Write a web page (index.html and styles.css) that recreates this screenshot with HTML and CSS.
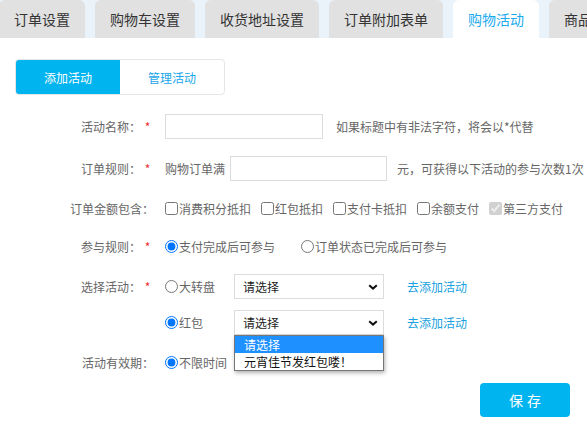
FILE: index.html
```html
<!DOCTYPE html>
<html lang="zh-CN">
<head>
<meta charset="utf-8">
<title>购物活动</title>
<link rel="stylesheet" href="styles.css">
</head>
<body>
<div class="tabs">
  <div class="tab">订单设置</div>
  <div class="tab">购物车设置</div>
  <div class="tab">收货地址设置</div>
  <div class="tab">订单附加表单</div>
  <div class="tab active">购物活动</div>
  <div class="tab">商品设置</div>
</div>

<div class="subtabs">
  <div class="subtab active">添加活动</div>
  <div class="subtab">管理活动</div>
</div>

<div class="form">
  <div class="row first">
    <div class="label">活动名称：<span class="req">*</span></div>
    <div class="field">
      <input class="text w-name" type="text">
      <span class="hint">如果标题中有非法字符，将会以*代替</span>
    </div>
  </div>

  <div class="row second">
    <div class="label">订单规则：<span class="req">*</span></div>
    <div class="field">
      <span>购物订单满</span>
      <input class="text w-amount" type="text">
      <span class="after">元，可获得以下活动的参与次数1次</span>
    </div>
  </div>

  <div class="row compact">
    <div class="label">订单金额包含：</div>
    <div class="field">
      <label class="check"><input type="checkbox">消费积分抵扣</label>
      <label class="check"><input type="checkbox">红包抵扣</label>
      <label class="check"><input type="checkbox">支付卡抵扣</label>
      <label class="check"><input type="checkbox">余额支付</label>
      <label class="check"><input type="checkbox" checked disabled>第三方支付</label>
    </div>
  </div>

  <div class="row">
    <div class="label">参与规则：<span class="req">*</span></div>
    <div class="field">
      <label class="check wide"><input type="radio" name="rule" checked>支付完成后可参与</label>
      <label class="check"><input type="radio" name="rule">订单状态已完成后可参与</label>
    </div>
  </div>

  <div class="group">
    <div class="row">
      <div class="label">选择活动：<span class="req">*</span></div>
      <div class="field">
        <label class="check fixed"><input type="radio" name="act">大转盘</label>
        <div class="select"><span>请选择</span><svg width="10" height="6" viewBox="0 0 10 6"><path d="M1.2 1.2L5 4.6L8.8 1.2" fill="none" stroke="#111" stroke-width="2"/></svg></div>
        <a class="link">去添加活动</a>
      </div>
    </div>
    <div class="row">
      <div class="label"></div>
      <div class="field">
        <label class="check fixed"><input type="radio" name="act" checked>红包</label>
        <div class="select"><span>请选择</span><svg width="10" height="6" viewBox="0 0 10 6"><path d="M1.2 1.2L5 4.6L8.8 1.2" fill="none" stroke="#111" stroke-width="2"/></svg>
          <div class="dropdown">
            <div class="option hl">请选择</div>
            <div class="option">元宵佳节发红包喽！</div>
          </div>
        </div>
        <a class="link">去添加活动</a>
      </div>
    </div>
  </div>

  <div class="row">
    <div class="label">活动有效期：</div>
    <div class="field">
      <label class="check"><input type="radio" name="valid" checked>不限时间</label>
    </div>
  </div>
</div>

<div class="actions">
  <div class="btn">保存</div>
</div>
</body>
</html>
```

FILE: styles.css
```css
html, body {
  margin: 0;
  padding: 0;
  background: #fff;
}
body {
  font-family: "Noto Sans CJK SC", "Microsoft YaHei", sans-serif;
  font-size: 12px;
  color: #666;
  overflow: hidden;
}

.tabs {
  display: flex;
  gap: 10px;
  height: 38px;
  margin-left: -1px;
  background: #eaf3fa;
  overflow: hidden;
  white-space: nowrap;
}
.tab {
  flex: none;
  padding: 0 15px;
  background: #e1e1e1;
  border-radius: 6px 6px 0 0;
  font-size: 14px;
  line-height: 38px;
  color: #333;
}
.tab.active {
  background: #fff;
  color: #1aaaf0;
}

.subtabs {
  display: flex;
  width: 210px;
  height: 36px;
  box-sizing: border-box;
  margin: 21px 0 0 15px;
  border: 1px solid #e6e6e6;
  border-radius: 4px;
  overflow: hidden;
}
.subtab {
  flex: 1;
  display: flex;
  align-items: center;
  justify-content: center;
  color: #1aa6ea;
}
.subtab.active {
  background: #00b4f0;
  color: #fff;
}

.form {
  display: flex;
  flex-direction: column;
  gap: 15px;
  margin-top: 19px;
}
.group {
  display: flex;
  flex-direction: column;
  gap: 11px;
}
.row {
  display: flex;
  gap: 11px;
  height: 25px;
}
.row.first {
  margin-bottom: 2px;
}
.row.compact {
  height: 23px;
  padding-top: 2px;
  box-sizing: border-box;
}
.label {
  flex: none;
  width: 154px;
  display: flex;
  align-items: center;
  justify-content: flex-end;
  color: #666;
}
.req {
  display: inline-block;
  width: 13px;
  text-align: center;
  color: #e8353a;
}
.field {
  display: flex;
  align-items: center;
  white-space: nowrap;
}

.text {
  box-sizing: border-box;
  height: 25px;
  margin: 0;
  padding: 0 6px;
  border: 1px solid #dcdcdc;
  background: #fff;
  font: inherit;
  outline: none;
}
.w-name {
  width: 158px;
}
.w-amount {
  width: 157px;
  margin-left: 5px;
}
.hint {
  margin-left: 13px;
}
.after {
  margin-left: 10px;
}

.check {
  display: flex;
  align-items: center;
  gap: 1px;
  margin-right: 10px;
  color: #666;
}
.check input {
  margin: 0;
  width: 13px;
  height: 13px;
}
.check.wide {
  margin-right: 26px;
}
.check.fixed {
  width: 69px;
  margin-right: 0;
}

.select {
  position: relative;
  display: flex;
  align-items: center;
  justify-content: space-between;
  width: 150px;
  height: 25px;
  box-sizing: border-box;
  padding: 0 5px 0 8px;
  border: 1px solid #dcdcdc;
  background: #fff;
  color: #222;
}
.link {
  margin-left: 23px;
  color: #1a9fe0;
}

.dropdown {
  position: absolute;
  top: 24px;
  left: -1px;
  width: 150px;
  box-sizing: border-box;
  border: 1px solid #767676;
  background: #fff;
  box-shadow: 1px 2px 4px rgba(0, 0, 0, 0.3);
  z-index: 2;
}
.option {
  height: 17px;
  line-height: 17px;
  padding-left: 9px;
  color: #111;
}
.option.hl {
  background: #1e90ff;
  color: #fff;
}

.actions {
  display: flex;
  justify-content: flex-end;
  padding-right: 17px;
  margin-top: 8px;
}
.btn {
  width: 90px;
  height: 34px;
  box-sizing: border-box;
  padding-left: 4px;
  display: flex;
  align-items: center;
  justify-content: center;
  background: #00b4f0;
  border-radius: 4px;
  color: #fff;
  font-size: 14px;
  letter-spacing: 4px;
}
```
